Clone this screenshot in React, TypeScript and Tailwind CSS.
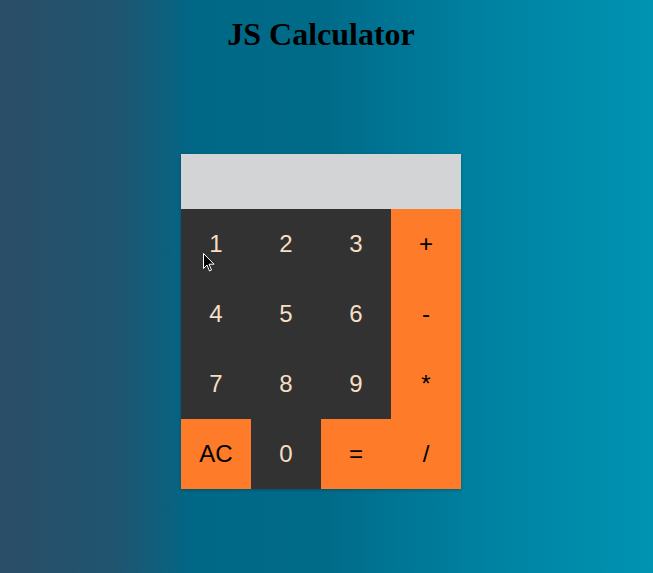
import React from "react";

type Btn = { label: string; kind: "num" | "op" };

const rows: Btn[][] = [
  [
    { label: "1", kind: "num" },
    { label: "2", kind: "num" },
    { label: "3", kind: "num" },
    { label: "+", kind: "op" },
  ],
  [
    { label: "4", kind: "num" },
    { label: "5", kind: "num" },
    { label: "6", kind: "num" },
    { label: "-", kind: "op" },
  ],
  [
    { label: "7", kind: "num" },
    { label: "8", kind: "num" },
    { label: "9", kind: "num" },
    { label: "*", kind: "op" },
  ],
  [
    { label: "AC", kind: "op" },
    { label: "0", kind: "num" },
    { label: "=", kind: "op" },
    { label: "/", kind: "op" },
  ],
];

export default function App() {
  return (
    <div className="min-h-[573px] w-full bg-[linear-gradient(90deg,#2b4d67_0%,#1f5570_18%,#006887_30%,#006b89_50%,#0082a2_75%,#0093b2_100%)]">
      <div className="w-[642px] flex flex-col items-center">
        <h1 className="mt-[16px] text-[32px] font-bold leading-[37px] text-black font-['Liberation_Serif',serif]">
          JS Calculator
        </h1>
        <div className="mt-[101px] w-[280px] relative shadow-[0_1px_3px_rgba(0,0,0,0.25)]">
          <div className="h-[55px] bg-[#d3d4d6]" />
          <div className="grid grid-cols-4">
            {rows.flat().map((b, i) => (
              <div
                key={i}
                className={
                  b.kind === "num"
                    ? "h-[70px] flex items-center justify-center bg-[#323232] text-[#f7dfc3] text-[24px] font-['Liberation_Sans',Arial,sans-serif]"
                    : "h-[70px] flex items-center justify-center bg-[#fe7b2a] text-black text-[24px] font-['Liberation_Sans',Arial,sans-serif]"
                }
              >
                {b.label}
              </div>
            ))}
          </div>
          <svg
            className="absolute left-[22px] top-[99px]"
            width="12"
            height="20"
            viewBox="0 0 12 20"
          >
            <path
              d="M0.5 0.5 L0.5 15.5 L4 12 L6.5 18 L8.5 17 L6 11.2 L11 11.2 Z"
              fill="#000"
              stroke="#fff"
              strokeWidth="1"
            />
          </svg>
        </div>
      </div>
    </div>
  );
}
